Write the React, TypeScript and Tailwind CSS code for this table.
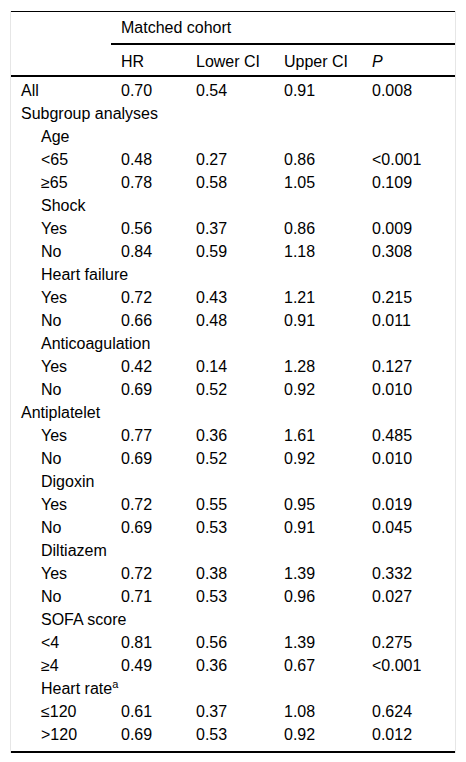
import React from "react";

type Row = { label: React.ReactNode; indent?: boolean; v?: [string, string, string, string] };

const rows: Row[] = [
  { label: "All", v: ["0.70", "0.54", "0.91", "0.008"] },
  { label: "Subgroup analyses" },
  { label: "Age", indent: true },
  { label: "<65", indent: true, v: ["0.48", "0.27", "0.86", "<0.001"] },
  { label: "≥65", indent: true, v: ["0.78", "0.58", "1.05", "0.109"] },
  { label: "Shock", indent: true },
  { label: "Yes", indent: true, v: ["0.56", "0.37", "0.86", "0.009"] },
  { label: "No", indent: true, v: ["0.84", "0.59", "1.18", "0.308"] },
  { label: "Heart failure", indent: true },
  { label: "Yes", indent: true, v: ["0.72", "0.43", "1.21", "0.215"] },
  { label: "No", indent: true, v: ["0.66", "0.48", "0.91", "0.011"] },
  { label: "Anticoagulation", indent: true },
  { label: "Yes", indent: true, v: ["0.42", "0.14", "1.28", "0.127"] },
  { label: "No", indent: true, v: ["0.69", "0.52", "0.92", "0.010"] },
  { label: "Antiplatelet" },
  { label: "Yes", indent: true, v: ["0.77", "0.36", "1.61", "0.485"] },
  { label: "No", indent: true, v: ["0.69", "0.52", "0.92", "0.010"] },
  { label: "Digoxin", indent: true },
  { label: "Yes", indent: true, v: ["0.72", "0.55", "0.95", "0.019"] },
  { label: "No", indent: true, v: ["0.69", "0.53", "0.91", "0.045"] },
  { label: "Diltiazem", indent: true },
  { label: "Yes", indent: true, v: ["0.72", "0.38", "1.39", "0.332"] },
  { label: "No", indent: true, v: ["0.71", "0.53", "0.96", "0.027"] },
  { label: "SOFA score", indent: true },
  { label: "<4", indent: true, v: ["0.81", "0.56", "1.39", "0.275"] },
  { label: "≥4", indent: true, v: ["0.49", "0.36", "0.67", "<0.001"] },
  {
    label: (
      <>
        Heart rate<span className="text-[11px] relative -top-[6px]">a</span>
      </>
    ),
    indent: true,
  },
  { label: "≤120", indent: true, v: ["0.61", "0.37", "1.08", "0.624"] },
  { label: ">120", indent: true, v: ["0.69", "0.53", "0.92", "0.012"] },
];

const grid = "grid grid-cols-[100px_75px_88px_88px_93px]";

export default function App() {
  return (
    <div
      className="bg-white w-[466px] h-[762px] pt-[11px] pl-[10px] text-black text-[16px]"
      style={{ fontFamily: '"Liberation Sans", Arial, sans-serif' }}
    >
      <div className="w-[446px] border-l border-r border-[#e6e6e6]">
        <div className="border-t border-black">
          <div className={grid}>
            <div />
            <div className="col-span-4 border-b-2 border-black pl-[10px] pt-[4px] pb-[4px] leading-[23px]">
              Matched cohort
            </div>
          </div>
          <div className={`${grid} border-b-2 border-black leading-[23px]`}>
            <div className="pt-[5px] pb-[2px]" />
            <div className="pl-[10px] pt-[5px] pb-[2px]">HR</div>
            <div className="pl-[10px] pt-[5px] pb-[2px]">Lower CI</div>
            <div className="pl-[10px] pt-[5px] pb-[2px]">Upper CI</div>
            <div className="pl-[10px] pt-[5px] pb-[2px] italic">P</div>
          </div>
        </div>
        <div className="pt-[2px] pb-[5px] border-b-2 border-black">
          {rows.map((r, i) => (
            <div key={i} className={`${grid} leading-[23px] h-[23px]`}>
              <div className={`whitespace-nowrap ${r.indent ? "pl-[30px]" : "pl-[10px]"} ${r.v ? "" : "col-span-5"}`}>
                {r.label}
              </div>
              {r.v &&
                r.v.map((x, j) => (
                  <div key={j} className="pl-[10px]">
                    {x}
                  </div>
                ))}
            </div>
          ))}
        </div>
      </div>
    </div>
  );
}
